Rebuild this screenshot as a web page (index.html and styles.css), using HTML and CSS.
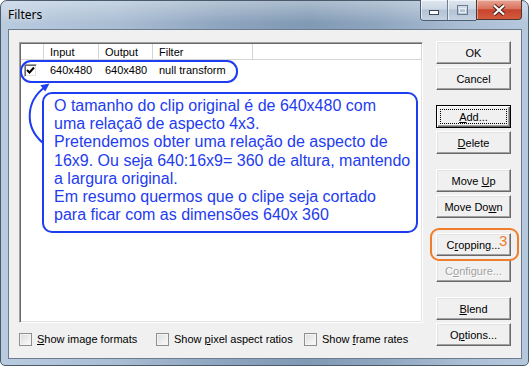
FILE: index.html
```html
<!DOCTYPE html>
<html lang="pt">
<head>
    <meta charset="UTF-8">
    <title>Filters</title>
    <link rel="stylesheet" href="styles.css">
</head>
<body>
<div class="window">
    <div class="titlebar">
        <span class="title">Filters</span>
        <div class="caption">
            <div class="cap-group">
                <span class="cap-btn cap-min">
                    <svg width="10" height="5" viewBox="0 0 10 5"><rect x="0.5" y="0.5" width="9" height="4" fill="#fff" stroke="#3b4756"/></svg>
                </span>
                <span class="cap-btn cap-max">
                    <svg width="11" height="10" viewBox="0 0 11 10"><rect x="0.5" y="0.5" width="10" height="9" fill="none" stroke="#6d7b8c"/><rect x="2.5" y="3.5" width="6" height="4" fill="none" stroke="#e8eef5"/></svg>
                </span>
            </div>
            <span class="cap-close">
                <svg width="14" height="12" viewBox="0 0 14 12"><path d="M2 1.5 L12 10.5 M12 1.5 L2 10.5" stroke="#4a2018" stroke-width="4.2"/><path d="M2 1.5 L12 10.5 M12 1.5 L2 10.5" stroke="#fff" stroke-width="2.2"/></svg>
            </span>
        </div>
    </div>
    <div class="client">
        <div class="left">
            <div class="list">
                <div class="list-head">
                    <span class="col col-check"></span>
                    <span class="col col-in">Input</span>
                    <span class="col col-out">Output</span>
                    <span class="col col-filter">Filter</span>
                    <span class="col col-rest"></span>
                </div>
                <div class="list-row">
                    <span class="col col-check">
                        <span class="check">
                            <svg width="9" height="9" viewBox="0 0 9 9"><path d="M1 4 L3.5 6.5 L8 1.5" fill="none" stroke="#000" stroke-width="2"/></svg>
                        </span>
                    </span>
                    <span class="col col-in">640x480</span>
                    <span class="col col-out">640x480</span>
                    <span class="col col-filter">null transform</span>
                </div>

                <!-- annotations drawn over the list -->
                <div class="row-mark"></div>
                <svg class="arrow" width="40" height="110" viewBox="0 0 40 110">
                    <path d="M23 100 C4 84, 6 58, 25 44" fill="none" stroke="#1e3cf0" stroke-width="2"/>
                    <polygon points="29.5,40.5 20.4,42.2 25.2,48.6" fill="#1e3cf0"/>
                </svg>
                <div class="callout">
                    O tamanho do clip original é de 640x480 com<br>
                    uma relaçaõ de aspecto 4x3.<br>
                    Pretendemos obter uma relação de aspecto de<br>
                    16x9. Ou seja 640:16x9= 360 de altura, mantendo<br>
                    a largura original.<br>
                    Em resumo quermos que o clipe seja cortado<br>
                    para ficar com as dimensões 640x 360
                </div>
            </div>
            <div class="options">
                <label class="opt opt-formats"><span class="box"></span><span><u>S</u>how image formats</span></label>
                <label class="opt opt-pixel"><span class="box"></span><span>Show <u>p</u>ixel aspect ratios</span></label>
                <label class="opt"><span class="box"></span><span>Show <u>f</u>rame rates</span></label>
            </div>
        </div>
        <div class="buttons">
            <div class="btn-group">
                <button class="btn">OK</button>
                <button class="btn">Cancel</button>
            </div>
            <div class="btn-group">
                <button class="btn btn-default"><u>A</u>dd...</button>
                <button class="btn"><u>D</u>elete</button>
            </div>
            <div class="btn-group">
                <button class="btn">Move <u>U</u>p</button>
                <button class="btn">Move Do<u>w</u>n</button>
            </div>
            <div class="btn-group">
                <div class="mark-wrap">
                    <button class="btn">C<u>r</u>opping...</button>
                    <div class="orange-mark"></div>
                    <span class="orange-num">3</span>
                </div>
                <button class="btn btn-disabled">C<u>o</u>nfigure...</button>
            </div>
            <div class="btn-group">
                <button class="btn"><u>B</u>lend</button>
                <button class="btn">O<u>p</u>tions...</button>
            </div>
        </div>
    </div>
</div>
</body>
</html>
```

FILE: styles.css
```css
* {
    box-sizing: border-box;
}
html, body {
    margin: 0;
    padding: 0;
}
body {
    width: 529px;
    height: 366px;
    overflow: hidden;
    font-family: "Liberation Sans", Arial, sans-serif;
    font-size: 11px;
    background: #fff;
}
.window {
    width: 529px;
    height: 366px;
    border: 1px solid #4b5b6e;
    border-radius: 7px 7px 5px 5px;
    background:
        linear-gradient(180deg, rgba(255,255,255,0.35) 0px, rgba(255,255,255,0) 22px),
        linear-gradient(90deg, #b9cbdf 0%, #a9bdd3 22%, #8ea5bf 42%, #8099b4 58%, #8fa6bf 72%, #aabed4 88%, #b6c8dc 100%);
    display: flex;
    flex-direction: column;
}

/* title bar */
.titlebar {
    height: 28px;
    display: flex;
    justify-content: space-between;
    align-items: flex-start;
    padding-left: 7px;
}
.title {
    font-family: "Noto Sans", sans-serif;
    font-size: 12px;
    line-height: 28px;
    color: #000;
    text-shadow: 0 0 8px rgba(255,255,255,0.8);
}
.caption {
    display: flex;
    margin-right: 6px;
    margin-top: -1px;
}
.cap-group {
    display: flex;
    border: 1px solid #4d5e72;
    border-top: none;
    border-right: none;
    border-radius: 0 0 0 4px;
    overflow: hidden;
}
.cap-btn {
    width: 27px;
    height: 20px;
    display: flex;
    align-items: center;
    justify-content: center;
    background: linear-gradient(180deg, #dfe7f0 0%, #cbd7e4 45%, #b3c3d5 50%, #c4d2e1 100%);
    box-shadow: inset 1px 1px 0 rgba(255,255,255,0.6);
}
.cap-min {
    border-right: 1px solid #6e7f93;
    padding-top: 5px;
}
.cap-max {
    width: 28px;
}
.cap-close {
    width: 46px;
    height: 20px;
    display: flex;
    align-items: center;
    justify-content: center;
    border: 1px solid #4d3830;
    border-top: none;
    border-radius: 0 0 4px 0;
    background: linear-gradient(180deg, #e9a595 0%, #d9735e 45%, #c7442c 52%, #d45a3f 100%);
    box-shadow: inset 1px 1px 0 rgba(255,255,255,0.4);
}

/* dialog area */
.client {
    margin-left: 7px;
    width: 514px;
    height: 330px;
    border: 1px solid #6b7c8f;
    background: #f0f0f0;
    display: flex;
    gap: 13px;
    padding: 12px 0 0 10px;
}
.left {
    width: 404px;
}
.list {
    position: relative;
    height: 281px;
    background: #fff;
    border: 1px solid;
    border-color: #a0a0a0 #fff #fff #a0a0a0;
    box-shadow: inset 1px 1px 0 #696969, inset -1px -1px 0 #e3e3e3;
}
.list-head,
.list-row {
    display: flex;
}
.list-head {
    height: 17px;
    line-height: 16px;
    color: #000;
    border-top: 1px solid #696969;
    border-left: 1px solid #696969;
}
.list-head .col {
    border-right: 1px solid #d5d5d5;
    border-bottom: 1px solid #d5d5d5;
}
.list-row {
    height: 20px;
    line-height: 20px;
    margin-left: 1px;
}
.col {
    padding-left: 6px;
    white-space: nowrap;
}
.col-check {
    width: 23px;
    padding-left: 0;
}
.col-in {
    width: 55px;
}
.col-out {
    width: 54px;
}
.col-filter {
    width: 100px;
}
.list-row .col-filter {
    width: auto;
}
.col-rest {
    flex: 1;
}
.check {
    display: flex;
    align-items: center;
    justify-content: center;
    width: 13px;
    height: 13px;
    margin: 4px 0 0 3px;
    background: #fff;
    border: 1px solid;
    border-color: #a0a0a0 #fff #fff #a0a0a0;
    box-shadow: inset 1px 1px 0 #696969, inset -1px -1px 0 #e3e3e3;
}

/* annotations */
.row-mark {
    position: absolute;
    left: 0;
    top: 17px;
    width: 218px;
    height: 23px;
    border: 2px solid #1e3cf0;
    border-radius: 11px;
}
.arrow {
    position: absolute;
    left: 0;
    top: 0;
}
.callout {
    position: absolute;
    left: 22px;
    top: 49px;
    width: 376px;
    height: 141px;
    border: 2px solid #1e3cf0;
    border-radius: 10px;
    padding: 3px 0 0 10px;
    font-size: 16px;
    line-height: 18.2px;
    color: #1e3cf0;
    white-space: nowrap;
    background: #fff;
}

/* checkboxes under the list */
.options {
    display: flex;
    margin-top: 10px;
    height: 13px;
    line-height: 13px;
}
.opt {
    display: flex;
    gap: 5px;
    white-space: nowrap;
}
.opt-formats {
    width: 137px;
}
.opt-pixel {
    width: 148px;
}
.box {
    width: 13px;
    height: 13px;
    border: 1px solid #8e8f8f;
    background: linear-gradient(135deg, #dcdcdc, #fbfbfb);
    box-shadow: inset 0 0 0 1px #f4f4f4;
}

/* buttons column */
.buttons {
    width: 75px;
    margin-top: -1px;
    display: flex;
    flex-direction: column;
    gap: 15px;
}
.btn-group {
    display: flex;
    flex-direction: column;
    gap: 3px;
}
.btn {
    display: block;
    width: 75px;
    height: 23px;
    padding: 0;
    font-family: "Liberation Sans", Arial, sans-serif;
    font-size: 11px;
    color: #000;
    background: #f0f0f0;
    border: 1px solid;
    border-color: #fff #696969 #696969 #fff;
    box-shadow: inset -1px -1px 0 #a0a0a0, inset 1px 1px 0 #e3e3e3;
}
.btn-default {
    border-color: #000;
    box-shadow: inset 1px 1px 0 #fff, inset -1px -1px 0 #696969, inset -2px -2px 0 #a0a0a0;
    outline: 1px dotted #000;
    outline-offset: -5px;
}
.btn-disabled {
    color: #a0a0a0;
    text-shadow: 1px 1px 0 #fff;
}
.mark-wrap {
    position: relative;
}
.orange-mark {
    position: absolute;
    left: -6px;
    top: -5px;
    width: 89px;
    height: 33px;
    border: 2px solid #f07d2c;
    border-radius: 9px;
}
.orange-num {
    position: absolute;
    left: 63px;
    top: -1px;
    font-size: 15px;
    color: #f07d2c;
}
```
